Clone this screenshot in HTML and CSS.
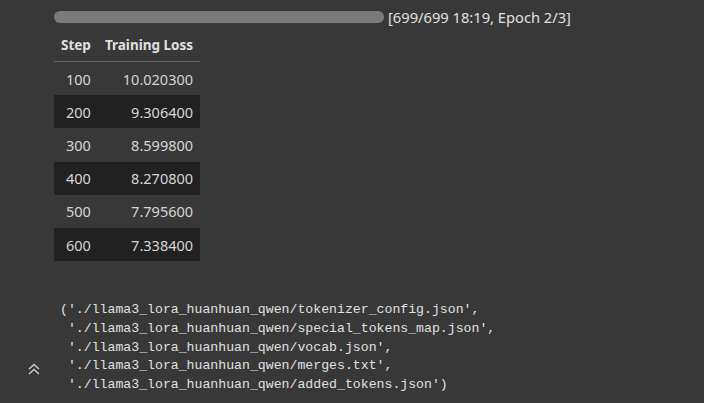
FILE: index.html
```html
<!DOCTYPE html>
<html>
<head>
<meta charset="utf-8">
<link rel="stylesheet" href="styles.css">
</head>
<body>
<div class="cell">
  <div class="gutter">
    <svg class="collapse" width="14" height="14" viewBox="0 0 14 14">
      <path d="M2 7 L7 2.5 L12 7" fill="none" stroke="#c8c8c8" stroke-width="1.6"/>
      <path d="M2 12 L7 7.5 L12 12" fill="none" stroke="#c8c8c8" stroke-width="1.6"/>
    </svg>
  </div>
  <div class="output">
    <div class="progress-row">
      <div class="progress"><div class="progress-fill"></div></div>
      <span class="progress-text">[699/699 18:19, Epoch 2/3]</span>
    </div>
    <table class="loss">
      <thead>
        <tr><th>Step</th><th>Training Loss</th></tr>
      </thead>
      <tbody>
        <tr><td>100</td><td>10.020300</td></tr>
        <tr><td>200</td><td>9.306400</td></tr>
        <tr><td>300</td><td>8.599800</td></tr>
        <tr><td>400</td><td>8.270800</td></tr>
        <tr><td>500</td><td>7.795600</td></tr>
        <tr><td>600</td><td>7.338400</td></tr>
      </tbody>
    </table>
    <pre class="code">('./llama3_lora_huanhuan_qwen/tokenizer_config.json',
 './llama3_lora_huanhuan_qwen/special_tokens_map.json',
 './llama3_lora_huanhuan_qwen/vocab.json',
 './llama3_lora_huanhuan_qwen/merges.txt',
 './llama3_lora_huanhuan_qwen/added_tokens.json')</pre>
  </div>
</div>
</body>
</html>
```
FILE: styles.css
```css
html, body {
  margin: 0;
  padding: 0;
  background: #383838;
  color: #d5d5d5;
  font-family: "Noto Sans", "Open Sans", sans-serif;
}
.cell {
  display: flex;
  height: 403px;
}
.gutter {
  width: 54px;
  flex: none;
  display: flex;
  flex-direction: column;
  justify-content: flex-end;
  align-items: flex-start;
  padding-left: 27px;
  padding-bottom: 27px;
  box-sizing: border-box;
}
.collapse {
  display: block;
}
.output {
  flex: 1;
  padding-top: 8px;
}
.progress-row {
  display: flex;
  align-items: center;
  height: 18px;
}
.progress {
  width: 330px;
  height: 12px;
  border-radius: 6px;
  background: #7a7a7a;
  overflow: hidden;
}
.progress-fill {
  width: 100%;
  height: 100%;
  background: #7a7a7a;
}
.progress-text {
  margin-left: 4px;
  font-size: 14.7px;
  color: #e0e0e0;
}
.loss {
  border-collapse: collapse;
  margin-top: 2px;
  width: 146px;
}
.loss th {
  font-size: 13.5px;
  font-weight: 700;
  text-align: right;
  height: 33px;
  padding: 0 7px;
  border-bottom: 1px solid #666;
  color: #e0e0e0;
  white-space: nowrap;
}
.loss td {
  font-size: 14.5px;
  text-align: right;
  height: 33.2px;
  padding: 0 7px;
}
.loss tbody tr:nth-child(even) td {
  background: #212121;
}
.code {
  margin: 40px 0 0 6px;
  font-family: "Liberation Mono", "DejaVu Sans Mono", monospace;
  font-size: 13.2px;
  line-height: 18.75px;
  color: #e0e0e0;
}
```
